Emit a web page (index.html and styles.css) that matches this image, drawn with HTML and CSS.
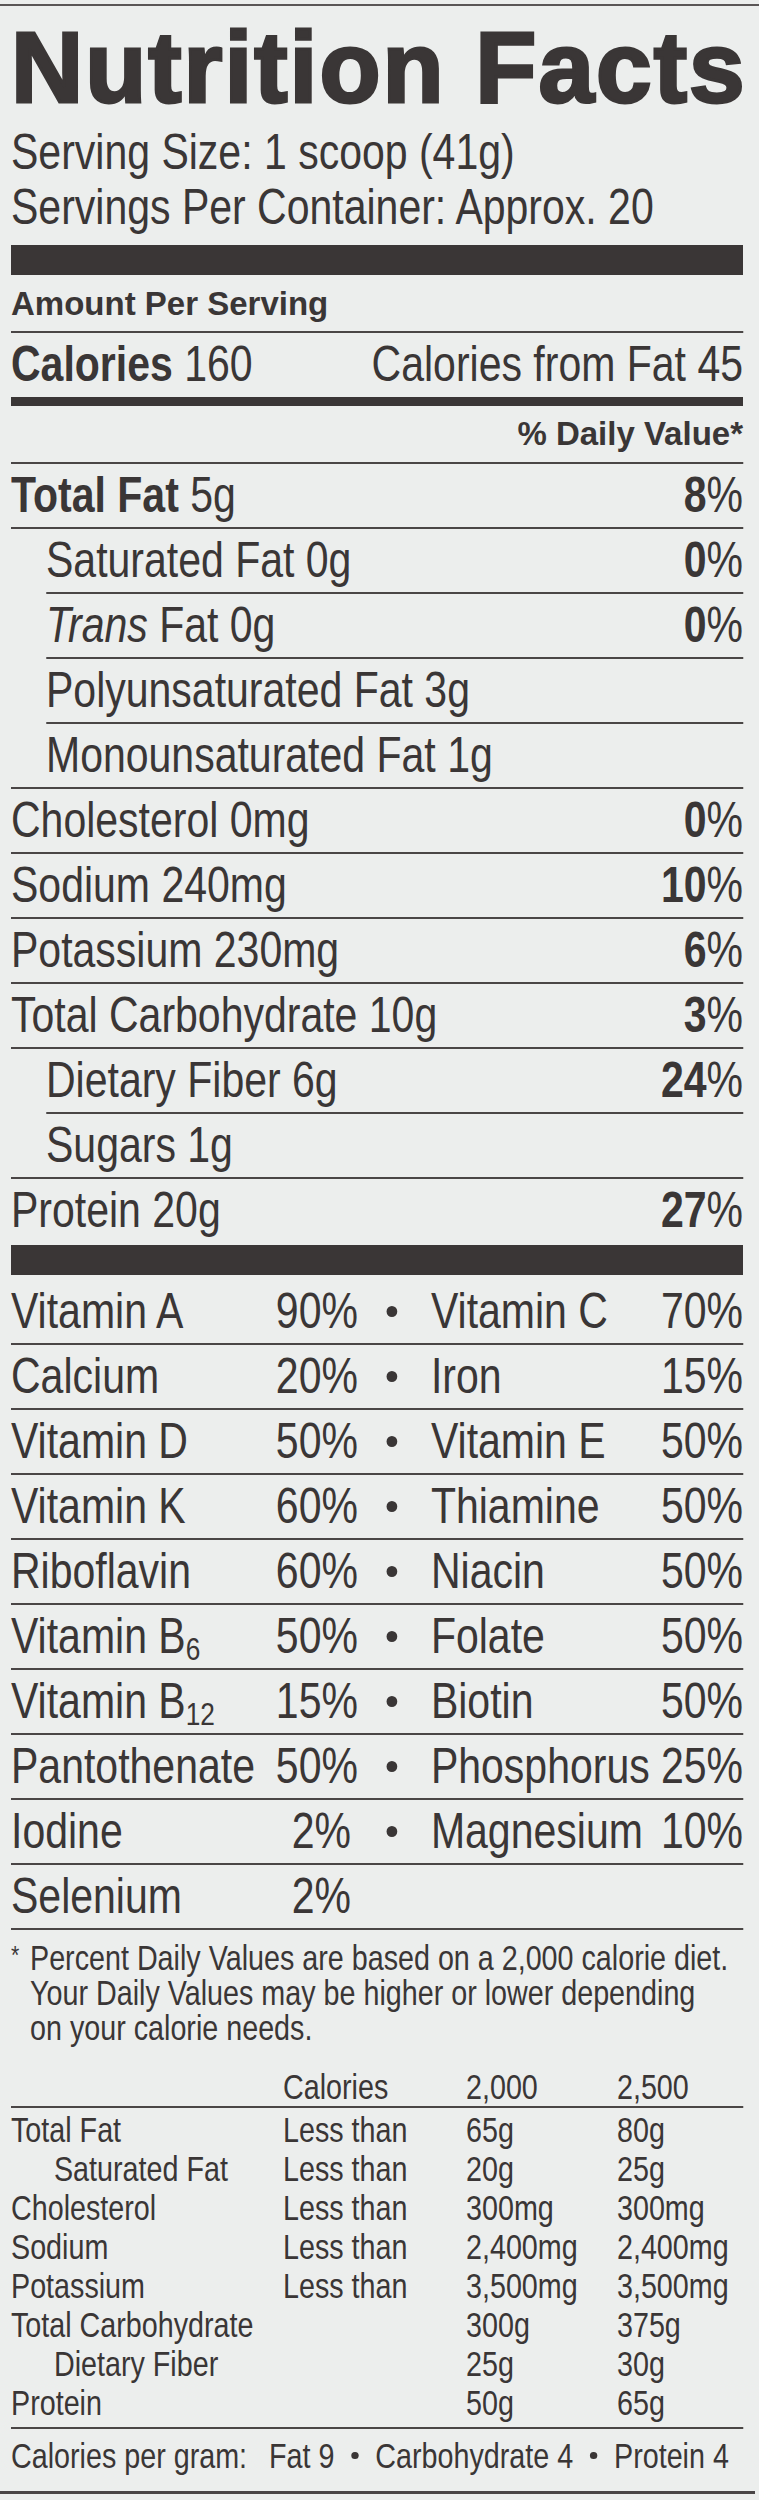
FILE: index.html
```html
<!DOCTYPE html>
<html lang="en">
<head>
<meta charset="utf-8">
<title>Nutrition Facts</title>
<link rel="stylesheet" href="styles.css">
</head>
<body>
<div class="page">
  <div class="rule-top"></div>
  <div class="label">
    <h1 class="title">Nutrition Facts</h1>
    <div class="cond serving-group">
      <p class="serving">Serving Size: 1 scoop (41g)</p>
      <p class="serving">Servings Per Container: Approx. 20</p>
    </div>
    <div class="bar bar-thick bar-top"></div>
    <div class="amount">Amount Per Serving</div>
    <div class="cond">
      <div class="row"><span><b>Calories</b> 160</span><span>Calories from Fat 45</span></div>
    </div>
    <div class="bar bar-mid"></div>
    <div class="dv">% Daily Value*</div>

    <div class="cond">
      <div class="row"><span><b>Total Fat</b> 5g</span><span class="pct"><b>8</b>%</span></div>
      <div class="row indent"><span>Saturated Fat 0g</span><span class="pct"><b>0</b>%</span></div>
      <div class="row sub"><span><i>Trans</i> Fat 0g</span><span class="pct"><b>0</b>%</span></div>
      <div class="row sub"><span>Polyunsaturated Fat 3g</span></div>
      <div class="row sub"><span>Monounsaturated Fat 1g</span></div>
      <div class="row"><span>Cholesterol 0mg</span><span class="pct"><b>0</b>%</span></div>
      <div class="row"><span>Sodium 240mg</span><span class="pct"><b>10</b>%</span></div>
      <div class="row"><span>Potassium 230mg</span><span class="pct"><b>6</b>%</span></div>
      <div class="row"><span>Total Carbohydrate 10g</span><span class="pct"><b>3</b>%</span></div>
      <div class="row indent"><span>Dietary Fiber 6g</span><span class="pct"><b>24</b>%</span></div>
      <div class="row sub"><span>Sugars 1g</span></div>
      <div class="row"><span>Protein 20g</span><span class="pct"><b>27</b>%</span></div>
    </div>

    <div class="bar bar-thick bar-vit"></div>

    <div class="cond vitamins">
      <div class="vrow"><span>Vitamin A</span><span class="vp">90%</span><span class="dotcell"><span class="dot"></span></span><span>Vitamin C</span><span class="vp">70%</span></div>
      <div class="vrow"><span>Calcium</span><span class="vp">20%</span><span class="dotcell"><span class="dot"></span></span><span>Iron</span><span class="vp">15%</span></div>
      <div class="vrow"><span>Vitamin D</span><span class="vp">50%</span><span class="dotcell"><span class="dot"></span></span><span>Vitamin E</span><span class="vp">50%</span></div>
      <div class="vrow"><span>Vitamin K</span><span class="vp">60%</span><span class="dotcell"><span class="dot"></span></span><span>Thiamine</span><span class="vp">50%</span></div>
      <div class="vrow"><span>Riboflavin</span><span class="vp">60%</span><span class="dotcell"><span class="dot"></span></span><span>Niacin</span><span class="vp">50%</span></div>
      <div class="vrow"><span>Vitamin B<sub>6</sub></span><span class="vp">50%</span><span class="dotcell"><span class="dot"></span></span><span>Folate</span><span class="vp">50%</span></div>
      <div class="vrow"><span>Vitamin B<sub>12</sub></span><span class="vp">15%</span><span class="dotcell"><span class="dot"></span></span><span>Biotin</span><span class="vp">50%</span></div>
      <div class="vrow"><span>Pantothenate</span><span class="vp">50%</span><span class="dotcell"><span class="dot"></span></span><span>Phosphorus</span><span class="vp">25%</span></div>
      <div class="vrow"><span>Iodine</span><span class="vp">2%</span><span class="dotcell"><span class="dot"></span></span><span>Magnesium</span><span class="vp">10%</span></div>
      <div class="vrow"><span>Selenium</span><span class="vp">2%</span></div>
    </div>

    <div class="cond">
      <p class="footnote"><span class="ast">*</span>Percent Daily Values are based on a 2,000 calorie diet.<br>Your Daily Values may be higher or lower depending<br>on your calorie needs.</p>

      <div class="dvtable">
        <div class="trow thead"><span></span><span>Calories</span><span>2,000</span><span>2,500</span></div>
        <div class="tbody">
          <div class="trow"><span>Total Fat</span><span>Less than</span><span>65g</span><span>80g</span></div>
          <div class="trow"><span class="tsub">Saturated Fat</span><span>Less than</span><span>20g</span><span>25g</span></div>
          <div class="trow"><span>Cholesterol</span><span>Less than</span><span>300mg</span><span>300mg</span></div>
          <div class="trow"><span>Sodium</span><span>Less than</span><span>2,400mg</span><span>2,400mg</span></div>
          <div class="trow"><span>Potassium</span><span>Less than</span><span>3,500mg</span><span>3,500mg</span></div>
          <div class="trow"><span>Total Carbohydrate</span><span></span><span>300g</span><span>375g</span></div>
          <div class="trow"><span class="tsub">Dietary Fiber</span><span></span><span>25g</span><span>30g</span></div>
          <div class="trow"><span>Protein</span><span></span><span>50g</span><span>65g</span></div>
        </div>
      </div>

      <div class="cpg"><span class="cpg-lead">Calories per gram:</span><span>Fat 9</span><span class="sdot"></span><span>Carbohydrate 4</span><span class="sdot"></span><span>Protein 4</span></div>
    </div>
  </div>
  <div class="rule-bottom"></div>
</div>
</body>
</html>
```

FILE: styles.css
```css
html, body {
  margin: 0;
  padding: 0;
  background: #eceeed;
}

body {
  color: #3a3636;
  font-family: "Liberation Sans", Arial, sans-serif;
}

.page {
  width: 759px;
  height: 2500px;
  overflow: hidden;
}

.rule-top {
  margin-top: 4px;
  height: 2px;
  background: #5a5656;
}

.rule-bottom {
  margin-top: 16px;
  height: 3px;
  background: #4a4646;
  width: 755px;
}

.label {
  margin-left: 11px;
  width: 732px;
}

/* Condensed text: laid out 1/0.82 wide and compressed horizontally (Arial Narrow proportions) */
.cond {
  width: 892.7px;
  transform: scaleX(0.82);
  transform-origin: 0 0;
}

.title {
  margin: 11px 0 0 0;
  font-weight: 700;
  font-size: 100px;
  line-height: 100px;
  letter-spacing: 2px;
  -webkit-text-stroke: 3px #3a3636;
  white-space: nowrap;
}

.serving-group {
  margin-top: 8px;
}

.serving {
  margin: 0;
  font-size: 50px;
  line-height: 55px;
  white-space: nowrap;
}

.bar {
  background: #3a3636;
}

.bar-thick {
  height: 30px;
}

.bar-top {
  margin-top: 10px;
}

.bar-mid {
  margin-top: 1px;
  height: 9px;
}

.bar-vit {
  margin-top: 3px;
}

.amount {
  margin-top: 9px;
  padding-bottom: 7px;
  font-weight: 700;
  font-size: 33px;
  line-height: 40px;
  white-space: nowrap;
}

.dv {
  text-align: right;
  font-weight: 700;
  font-size: 33px;
  line-height: 56px;
}

.row {
  display: flex;
  justify-content: space-between;
  gap: 20px;
  border-top: 2px solid #4a4646;
  font-size: 50px;
  line-height: 63px;
  height: 63px;
  white-space: nowrap;
}

.row.indent {
  padding-left: 42.7px;
}

.row.sub {
  margin-left: 42.7px;
}

.pct b {
  font-weight: 700;
}

.vitamins {
  margin-top: 5px;
}

.vrow {
  display: grid;
  grid-template-columns: 323px 91.5px 97.6px 1fr auto;
  border-bottom: 2px solid #4a4646;
  font-size: 50px;
  line-height: 63px;
  height: 63px;
  white-space: nowrap;
}

.vrow sub {
  font-size: 32px;
  line-height: 0;
  vertical-align: -7px;
}

.vp {
  text-align: right;
}

.dotcell {
  display: flex;
  align-items: center;
  justify-content: center;
  padding-left: 2px;
}

.dot {
  width: 13.4px;
  height: 11px;
  border-radius: 50%;
  background: #3a3636;
}

.footnote {
  margin: 0;
  padding-top: 8px;
  padding-left: 23.2px;
  text-indent: -23.2px;
  font-size: 35px;
  line-height: 35px;
  white-space: nowrap;
}

.ast {
  display: inline-block;
  width: 23.2px;
  text-indent: 0;
  font-size: 26px;
  vertical-align: 6px;
}

.dvtable {
  margin-top: 23px;
  font-size: 35px;
}

.trow {
  display: grid;
  grid-template-columns: 331.7px 223.2px 184.1px 1fr;
  line-height: 39px;
  height: 39px;
  white-space: nowrap;
}

.thead {
  line-height: 38px;
  height: 38px;
  border-bottom: 2px solid #4a4646;
}

.tbody {
  margin-top: 2px;
}

.tsub {
  padding-left: 52.4px;
}

.cpg {
  margin-top: 5px;
  border-top: 2px solid #4a4646;
  padding-top: 7px;
  display: flex;
  align-items: center;
  gap: 20.7px;
  font-size: 35px;
  line-height: 39px;
  height: 39px;
  white-space: nowrap;
}

.cpg-lead {
  margin-right: 6px;
}

.sdot {
  width: 8.5px;
  height: 7px;
  border-radius: 50%;
  background: #3a3636;
}
```
